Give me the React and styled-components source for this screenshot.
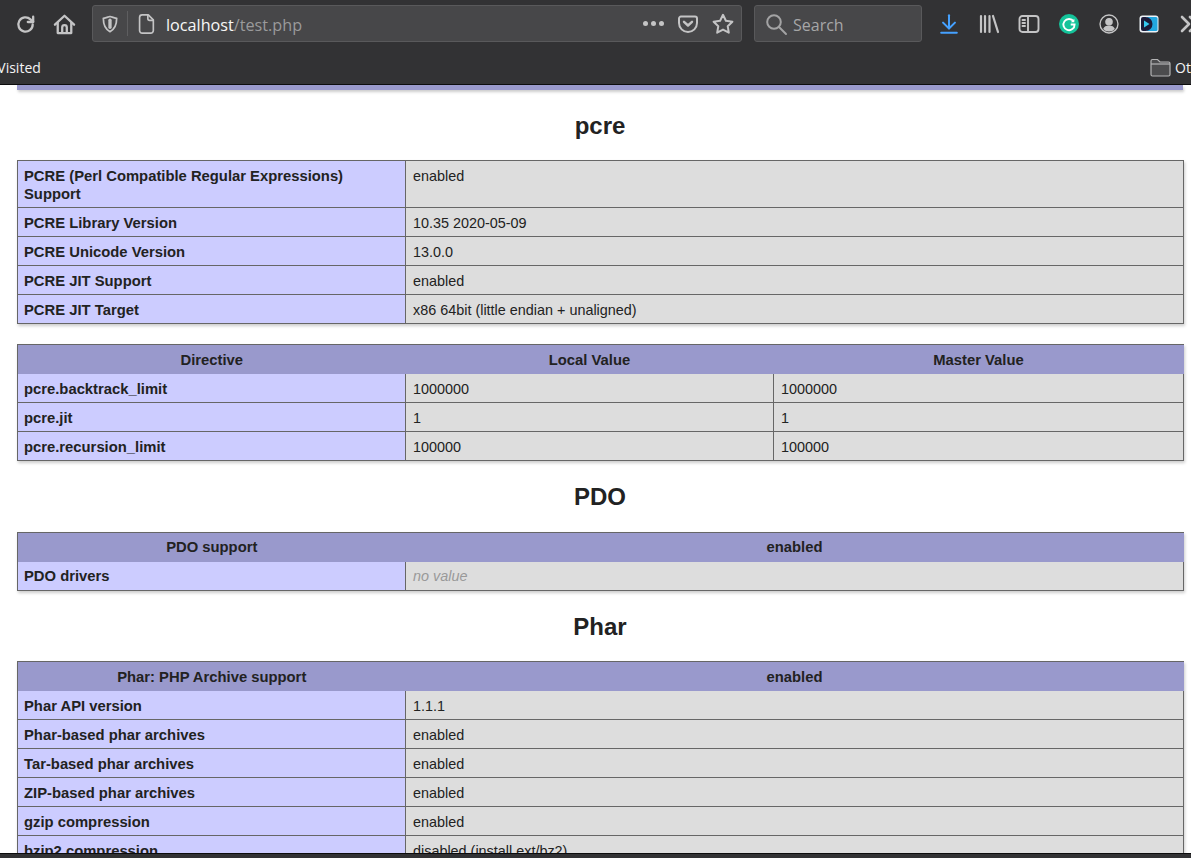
import React from 'react';
import styled, { createGlobalStyle } from 'styled-components';

const GlobalStyle = createGlobalStyle`
	html, body {
		margin: 0;
		padding: 0;
		background: #fff;
	}
`;

const pcreInfo = [
	['PCRE (Perl Compatible Regular Expressions) Support', 'enabled'],
	['PCRE Library Version', '10.35 2020-05-09'],
	['PCRE Unicode Version', '13.0.0'],
	['PCRE JIT Support', 'enabled'],
	['PCRE JIT Target', 'x86 64bit (little endian + unaligned)'],
];

const pcreDirectives = [
	['pcre.backtrack_limit', '1000000', '1000000'],
	['pcre.jit', '1', '1'],
	['pcre.recursion_limit', '100000', '100000'],
];

const pharInfo = [
	['Phar API version', '1.1.1'],
	['Phar-based phar archives', 'enabled'],
	['Tar-based phar archives', 'enabled'],
	['ZIP-based phar archives', 'enabled'],
	['gzip compression', 'enabled'],
	['bzip2 compression', 'disabled (install ext/bz2)'],
];

const Icon = ({ children, size = 24, color = '#c4c4c5', width = 1.9 }) => (
	<svg
		width={size}
		height={size}
		viewBox='0 0 24 24'
		fill='none'
		stroke={color}
		strokeWidth={width}
		strokeLinecap='round'
		strokeLinejoin='round'>
		{children}
	</svg>
);

const InfoTable = ({ columns, rows, head }) => (
	<Table>
		<colgroup>
			{columns.map((w, i) => (
				<col key={i} style={{ width: w }} />
			))}
		</colgroup>
		{head && (
			<thead>
				<tr>
					{head.map((h) => (
						<HeaderCell key={h}>{h}</HeaderCell>
					))}
				</tr>
			</thead>
		)}
		<tbody>
			{rows.map(([label, ...values]) => (
				<tr key={label}>
					<LabelCell>{label}</LabelCell>
					{values.map((v, i) => (
						<ValueCell key={i} $muted={v === 'no value'}>
							{v}
						</ValueCell>
					))}
				</tr>
			))}
		</tbody>
	</Table>
);

const App = () => {
	return (
		<Wrapper>
			<GlobalStyle />
			<Chrome>
				<Toolbar>
					<NavGroup>
						<Slot>
							<Icon size={23} width={2.4}>
								<path d='M19.500 12a7.500 7.500 0 1 1-2.300-5.400L20 9.200' />
								<path d='M20 3.800v5.600h-5.600' />
							</Icon>
						</Slot>
						<Slot $width={38}>
							<Icon size={25} width={2.2}>
								<path d='M2.800 12.200 12 3.600l9.200 8.600' />
								<path d='M5.500 10.500v9.700h13v-9.700' />
								<path d='M9.800 20v-5.200a2.200 2.200 0 0 1 4.400 0V20' />
							</Icon>
						</Slot>
					</NavGroup>
					<AddressBar>
						<ShieldSlot>
							<Icon size={20} width={2.1}>
								<path d='M4 5.200C8 4.200 10 3.500 12 3c2 .5 4 1.200 8 2.200 0 7.800-2 13-8 16-6-3-8-8.200-8-16Z' />
								<path d='M12 7.500v8.500' strokeWidth={4} />
							</Icon>
						</ShieldSlot>
						<Divider />
						<PageIcon>
							<Icon size={22} width={1.8}>
								<path d='M5 4.800A2.800 2.800 0 0 1 7.800 2h6.700L20 7.500v11.700a2.800 2.800 0 0 1-2.800 2.800H7.800A2.800 2.800 0 0 1 5 19.200Z' />
								<path d='M14 2.500v3.500a2 2 0 0 0 2 2h3.700' />
							</Icon>
						</PageIcon>
						<Url>
							localhost<UrlPath>/test.php</UrlPath>
						</Url>
						<Dots>
							<Dot />
							<Dot />
							<Dot />
						</Dots>
						<BarIcon>
							<Icon size={24} width={2}>
								<path d='M3 6.500A2 2 0 0 1 5 4.500h14a2 2 0 0 1 2 2v4.500a9 9 0 0 1-18 0Z' />
								<path d='m8 9.800 4 3.700 4-3.700' strokeWidth={2.4} />
							</Icon>
						</BarIcon>
						<BarIcon>
							<Icon size={24} width={2}>
								<path d='m12 2.800 2.900 6 6.500.9-4.700 4.500 1.100 6.500-5.800-3.100-5.800 3.100 1.100-6.500-4.700-4.500 6.500-.9Z' />
							</Icon>
						</BarIcon>
					</AddressBar>
					<SearchBar>
						<Icon size={24} color='#a3a3a4' width={2}>
							<circle cx='10' cy='10' r='6.800' />
							<path d='m15 15 7 7' />
						</Icon>
						<SearchText>Search</SearchText>
					</SearchBar>
					<ActionGroup>
						<Slot>
							<Icon color='#45a1ff' size={22} width={2.2}>
								<path d='M12 2.500v14' />
								<path d='m5.500 10.500 6.500 6.500 6.500-6.500' />
								<path d='M3.500 21.500h17' />
							</Icon>
						</Slot>
						<Slot>
							<Icon size={24} width={2.2}>
								<path d='M4 4v16' />
								<path d='M8 4v16' />
								<path d='M12.500 4v16' />
								<path d='m16 4 5 16' />
							</Icon>
						</Slot>
						<Slot>
							<Icon size={24} width={1.9}>
								<rect x='2.500' y='4' width='19' height='16' rx='3' />
								<path d='M11 4v16' />
								<path d='M5.500 8h2.500M5.500 11h2.500M5.500 14h2.500' />
							</Icon>
						</Slot>
						<Slot>
							<svg width='22' height='22' viewBox='0 0 22 22'>
								<circle cx='11' cy='11' r='10' fill='#15c39a' />
								<path
									d='M15.600 8.400A5.600 5.600 0 1 0 16.600 11.500h-3.900'
									fill='none'
									stroke='#fff'
									strokeWidth='1.900'
								/>
								<path d='M16.300 5.800v3.500h-3.500' fill='#fff' />
							</svg>
						</Slot>
						<Slot>
							<Icon size={22} width={1.5}>
								<circle cx='12' cy='12' r='9.800' />
								<circle cx='12' cy='9.500' r='3.400' fill='#c4c4c5' />
								<path
									d='M5.500 17.500c1-3 3.500-4 6.500-4s5.500 1 6.500 4a9 9 0 0 1-13 0Z'
									fill='#c4c4c5'
									stroke='none'
								/>
							</Icon>
						</Slot>
						<Slot>
							<svg width='20' height='18' viewBox='0 0 20 18'>
								<rect x='.5' y='.5' width='19' height='17' rx='3' fill='#eef3f8' />
								<rect x='7' y='2' width='11.500' height='14' rx='1.500' fill='#22a7e0' />
								<path d='M2 4a2 2 0 0 1 2-2h2.500a7 7 0 0 1 0 14H4a2 2 0 0 1-2-2Z' fill='#1c1b3a' />
								<path d='M5 5.500v7l5.500-3.500Z' fill='#35c8f0' />
							</svg>
						</Slot>
						<Slot>
							<Icon size={24} width={2.6}>
								<path d='m5 5 7 7-7 7' />
								<path d='m13 5 7 7-7 7' />
							</Icon>
						</Slot>
					</ActionGroup>
				</Toolbar>
				<Bookmarks>
					<Visited>Most Visited</Visited>
					<OtherBookmarks>
						<FolderIcon width='21' height='19' viewBox='0 0 21 19'>
							<path
								d='M1 3a1.500 1.500 0 0 1 1.500-1.500h5l2.500 2.500h8.500A1.500 1.500 0 0 1 20 5.500v11a1.500 1.500 0 0 1-1.500 1.500h-16A1.500 1.500 0 0 1 1 16.500Z'
								fill='#4c4c4e'
								stroke='#b4b4b5'
								strokeWidth='1.200'
							/>
							<path d='M1 6h19' stroke='#b4b4b5' strokeWidth='1.200' />
						</FolderIcon>
						<span>Other Bookmarks</span>
					</OtherBookmarks>
				</Bookmarks>
			</Chrome>
			<Page>
				<TableEnd />
				<Heading>pcre</Heading>
				<InfoTable columns={[388, 778]} rows={pcreInfo} />
				<Spacer />
				<InfoTable
					columns={[388, 368, 410]}
					head={['Directive', 'Local Value', 'Master Value']}
					rows={pcreDirectives}
				/>
				<Heading>PDO</Heading>
				<InfoTable
					columns={[388, 778]}
					head={['PDO support', 'enabled']}
					rows={[['PDO drivers', 'no value']]}
				/>
				<Heading>Phar</Heading>
				<InfoTable
					columns={[388, 778]}
					head={['Phar: PHP Archive support', 'enabled']}
					rows={pharInfo}
				/>
			</Page>
			<BottomBar />
		</Wrapper>
	);
};

const Wrapper = styled.div`
	display: flex;
	flex-direction: column;
	height: 858px;
	overflow: hidden;
	font-family: 'Liberation Sans', Arial, sans-serif;
`;

const Chrome = styled.header`
	flex: none;
	height: 84px;
	background: #323234;
	border-bottom: 1px solid #0c0c0d;
	overflow: hidden;
	font-family: 'Open Sans', 'Noto Sans', sans-serif;
`;

const Toolbar = styled.div`
	display: flex;
	align-items: flex-start;
	height: 50px;
	padding: 5px 0 0 5px;
	box-sizing: border-box;
`;

const NavGroup = styled.div`
	display: flex;
	flex: none;
	margin-right: 9px;
`;

const ActionGroup = styled.div`
	display: flex;
	flex: none;
	margin-left: 7px;
`;

const Slot = styled.div`
	flex: none;
	display: flex;
	align-items: center;
	justify-content: center;
	width: ${(p) => p.$width || 40}px;
	height: 38px;
`;

const AddressBar = styled.div`
	flex: none;
	display: flex;
	align-items: center;
	width: 650px;
	height: 37px;
	padding-right: 1px;
	box-sizing: border-box;
	background: #474749;
	border: 1px solid #59595b;
	border-radius: 3px;
`;

const ShieldSlot = styled.div`
	display: flex;
	justify-content: center;
	width: 34px;
`;

const Divider = styled.div`
	width: 1px;
	height: 25px;
	background: #5e5e60;
`;

const PageIcon = styled.div`
	display: flex;
	justify-content: center;
	width: 35px;
`;

const Url = styled.div`
	flex: 1;
	margin: 2px 0 0 3px;
	font-size: 16.2px;
	color: #f7f7f7;
	white-space: nowrap;
`;

const UrlPath = styled.span`
	color: #9a9a9b;
`;

const Dots = styled.div`
	display: flex;
	gap: 3px;
	margin-right: 6px;
`;

const Dot = styled.span`
	width: 5px;
	height: 5px;
	border-radius: 50%;
	background: #c4c4c5;
`;

const BarIcon = styled.div`
	display: flex;
	justify-content: center;
	width: 35px;
`;

const SearchBar = styled.div`
	flex: none;
	display: flex;
	align-items: center;
	gap: 5px;
	width: 168px;
	height: 37px;
	margin-left: 12px;
	padding-left: 9px;
	box-sizing: border-box;
	background: #474749;
	border: 1px solid #59595b;
	border-radius: 3px;
`;

const SearchText = styled.span`
	margin-top: 2px;
	font-size: 16px;
	color: #a6a6a7;
`;

const Bookmarks = styled.div`
	display: flex;
	align-items: center;
	justify-content: space-between;
	height: 34px;
	font-size: 14px;
	color: #f4f4f4;
	white-space: nowrap;
	overflow: hidden;
`;

const Visited = styled.span`
	margin-left: -39px;
`;

const OtherBookmarks = styled.div`
	flex: none;
	display: flex;
	align-items: center;
	gap: 4px;
	width: 41px;
`;

const FolderIcon = styled.svg`
	flex: none;
`;

const Page = styled.main`
	flex: 1;
	min-height: 0;
	overflow: hidden;
	padding: 0 8px 0 17px;
	background: #fff;
	color: #222;
`;

const TableEnd = styled.div`
	height: 5px;
	background: #99c;
	box-shadow: 1px 2px 3px #ccc;
`;

const Heading = styled.h2`
	margin: 22px 0 20.4px;
	font-size: 24px;
	line-height: 28px;
	font-weight: bold;
	text-align: center;
`;

const Spacer = styled.div`
	height: 20px;
`;

const Table = styled.table`
	width: 1166px;
	table-layout: fixed;
	border-collapse: collapse;
	box-shadow: 1px 2px 3px #ccc;
	font-size: 14.4px;
	line-height: 18px;
`;

const HeaderCell = styled.th`
	height: 18px;
	padding: 5.6px 6px 5.4px;
	background: #99c;
	border-top: 1px solid #666;
	font-size: 14.8px;
	font-weight: bold;
	text-align: center;
	&:first-child {
		border-left: 1px solid #666;
	}
`;

const LabelCell = styled.td`
	padding: 5.6px 6px 4.4px;
	background: #ccf;
	border: 1px solid #666;
	font-size: 14.8px;
	font-weight: bold;
	vertical-align: baseline;
	thead + tbody tr:first-child & {
		border-top: 0;
	}
`;

const ValueCell = styled.td`
	padding: 5.6px 7px 4.4px;
	background: #ddd;
	border: 1px solid #666;
	vertical-align: baseline;
	font-style: ${(p) => (p.$muted ? 'italic' : 'normal')};
	color: ${(p) => (p.$muted ? '#999' : '#222')};
	thead + tbody tr:first-child & {
		border-top: 0;
	}
`;

const BottomBar = styled.footer`
	flex: none;
	height: 4px;
	background: #323234;
	border-top: 1px solid #0c0c0d;
`;

export default App;
